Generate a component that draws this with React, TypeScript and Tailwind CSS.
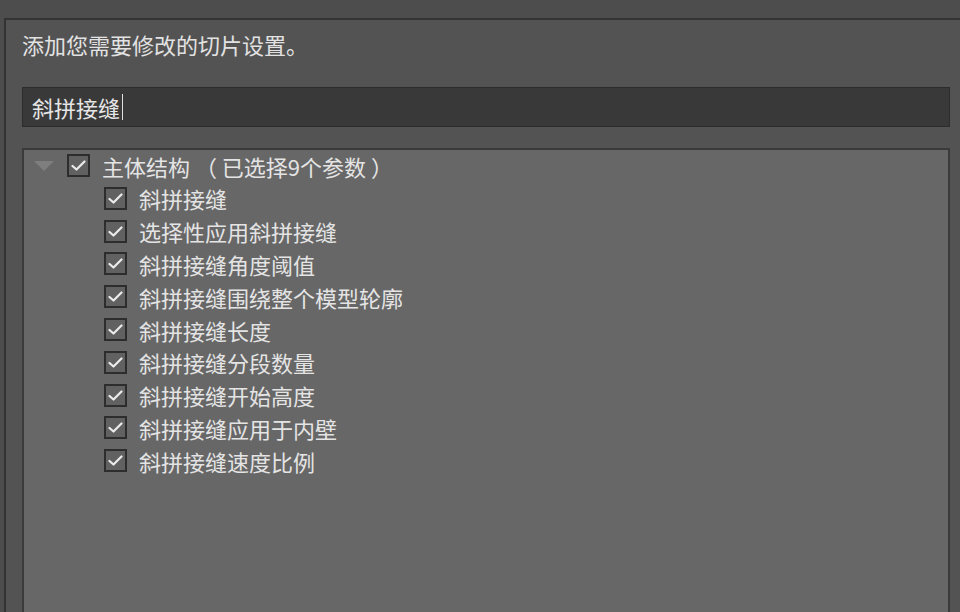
const font = {
  fontFamily: '"Noto Sans CJK SC", "Noto Sans", "Liberation Sans", sans-serif',
};

const children = [
  "斜拼接缝",
  "选择性应用斜拼接缝",
  "斜拼接缝角度阈值",
  "斜拼接缝围绕整个模型轮廓",
  "斜拼接缝长度",
  "斜拼接缝分段数量",
  "斜拼接缝开始高度",
  "斜拼接缝应用于内壁",
  "斜拼接缝速度比例",
];

function CheckBox() {
  return (
    <div className="w-[23px] h-[23px] shrink-0 border-2 border-[#2d2d2d] bg-[#616161] flex items-center justify-center">
      <svg width="15" height="13" viewBox="0 0 15 13" fill="none">
        <path d="M1.5 7 L5.5 10.5 L13.5 2.5" stroke="#ececec" strokeWidth="2.2" strokeLinecap="round" strokeLinejoin="round" />
      </svg>
    </div>
  );
}

export default function App() {
  return (
    <div className="w-[960px] h-[612px] overflow-hidden bg-[#4d4d4d] pt-[18px] pl-[4px] flex flex-col" style={font}>
      {/* Settings panel */}
      <div className="flex-1 min-h-0 bg-[#535353] border-l-2 border-t-2 border-[#333333] pl-[16px] pr-[10px] pt-[9px] flex flex-col">
        <p className="text-[22px] leading-[30px] text-[#e2e2e2]">添加您需要修改的切片设置。</p>

        {/* Search input */}
        <div className="mt-[28px] h-[40px] shrink-0 bg-[#393939] border border-[#2c2c2c] flex items-center pl-[9px]">
          <span className="text-[22px] leading-[30px] text-[#e6e6e6]">斜拼接缝</span>
          <span className="w-px h-[26px] bg-[#e0e0e0] ml-[2px]" />
        </div>

        {/* Tree */}
        <div className="mt-[21px] flex-1 min-h-0 bg-[#676767] border-2 border-[#3a3a3a] border-b-0">
          <div className="h-[33px] flex items-center pl-[10px] -mt-[1px]">
            <svg width="20" height="10" viewBox="0 0 20 10" className="shrink-0">
              <path d="M0 0 H20 L10 10 Z" fill="#7e7e7e" />
            </svg>
            <div className="ml-[13px]">
              <CheckBox />
            </div>
            <span className="ml-[12px] text-[22px] leading-[30px] text-[#e4e4e4] whitespace-pre">主体结构 （ 已选择9个参数 ）</span>
          </div>
          {children.map((c) => (
            <div key={c} className="h-[32.8px] flex items-center pl-[80px]">
              <CheckBox />
              <span className="ml-[12px] text-[22px] leading-[30px] text-[#e4e4e4]">{c}</span>
            </div>
          ))}
        </div>
      </div>
    </div>
  );
}
